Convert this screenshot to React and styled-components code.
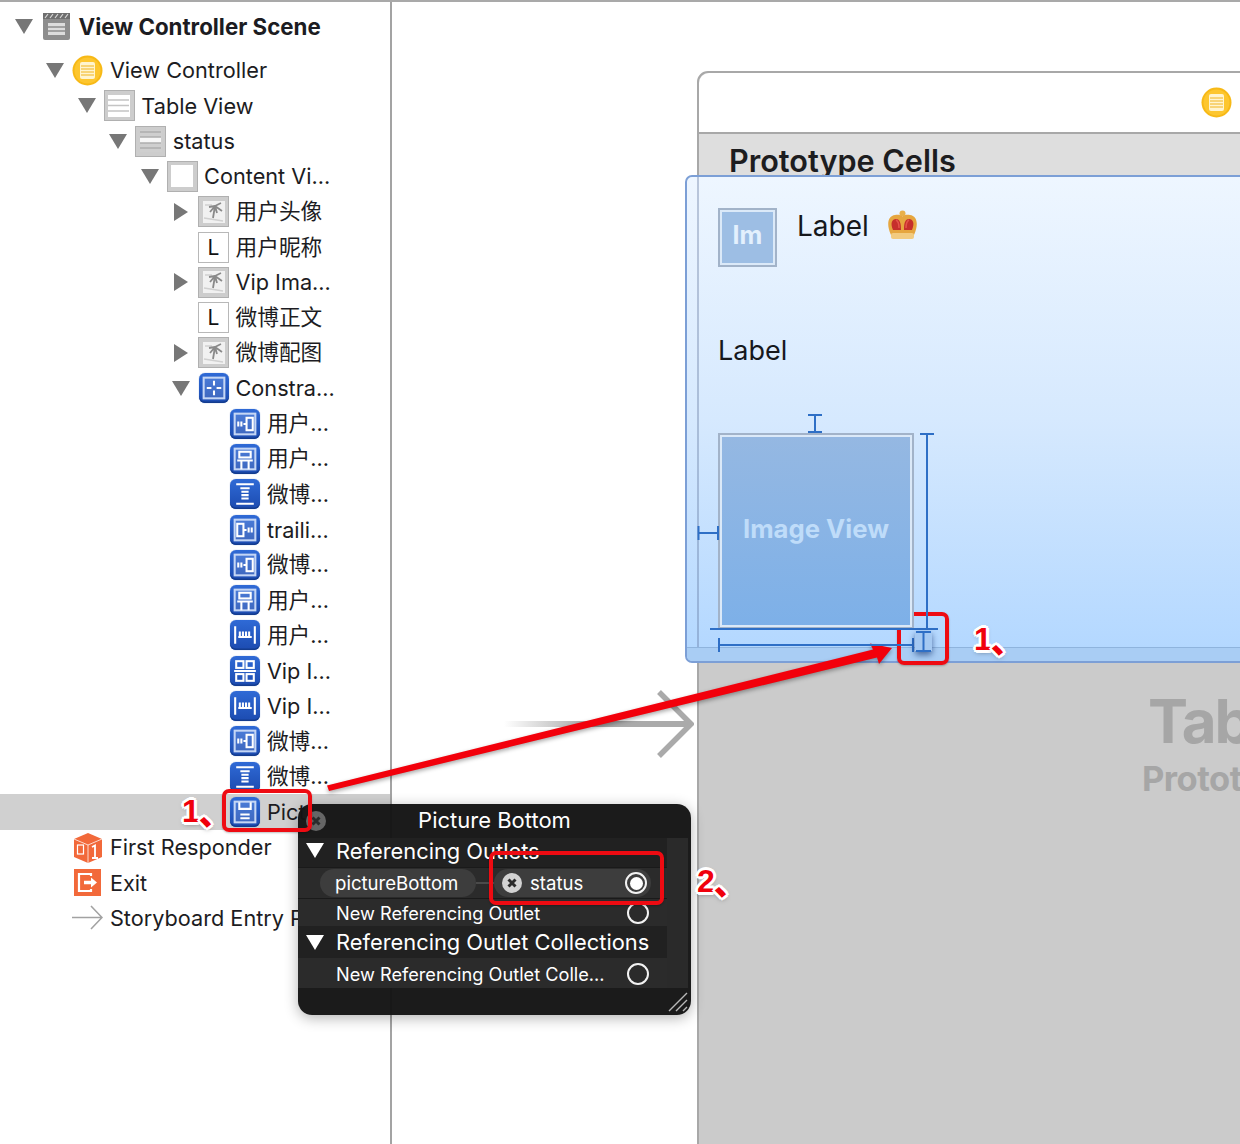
import React from "react"
import styled, { createGlobalStyle } from "styled-components"

const FONT = `Inter, "Noto Sans CJK SC", sans-serif`

const GlobalStyle = createGlobalStyle`
  html, body {
    margin: 0;
    padding: 0;
    background: #fff;
  }
  body {
    font-family: ${FONT};
    color: #1c1c22;
  }
`

const outline = [
  { depth: 1, tri: "open", icon: "vc", label: "View Controller" },
  { depth: 2, tri: "open", icon: "table", label: "Table View" },
  { depth: 3, tri: "open", icon: "cell", label: "status" },
  { depth: 4, tri: "open", icon: "content", label: "Content Vi…" },
  { depth: 5, tri: "closed", icon: "image", label: "用户头像" },
  { depth: 5, icon: "label", label: "用户昵称" },
  { depth: 5, tri: "closed", icon: "image", label: "Vip Ima…" },
  { depth: 5, icon: "label", label: "微博正文" },
  { depth: 5, tri: "closed", icon: "image", label: "微博配图" },
  { depth: 5, tri: "open", icon: "group", label: "Constra…" },
  { depth: 6, icon: "leading", label: "用户…" },
  { depth: 6, icon: "top", label: "用户…" },
  { depth: 6, icon: "beam", label: "微博…" },
  { depth: 6, icon: "trailing", label: "traili…" },
  { depth: 6, icon: "leading", label: "微博…" },
  { depth: 6, icon: "top", label: "用户…" },
  { depth: 6, icon: "width", label: "用户…" },
  { depth: 6, icon: "grid", label: "Vip I…" },
  { depth: 6, icon: "width", label: "Vip I…" },
  { depth: 6, icon: "leading", label: "微博…" },
  { depth: 6, icon: "beam", label: "微博…" },
  { depth: 6, icon: "floppy", label: "Pict…", selected: true },
  { depth: 1, icon: "responder", label: "First Responder" },
  { depth: 1, icon: "exit", label: "Exit" },
  { depth: 1, icon: "entry", label: "Storyboard Entry Poi…" },
]

const hasCjk = (text) => /[\u4e00-\u9fff]/.test(text)

const Page = styled.div`
  position: relative;
  display: flex;
  width: 1240px;
  height: 1144px;
  overflow: hidden;
  box-sizing: border-box;
  border-top: 2px solid #a9a9a9;
  background: #fff;
`

const Sidebar = styled.aside`
  flex: 0 0 392px;
  box-sizing: border-box;
  padding-top: 7px;
  border-right: 2px solid #a3a3a3;
  overflow: hidden;
`

const Row = styled.div`
  display: flex;
  align-items: center;
  box-sizing: border-box;
  height: 35.32px;
  padding-left: ${(p) => 15 + p.$depth * 31.4}px;
  font-size: 21.7px;
  white-space: nowrap;
  background: ${(p) => (p.$selected ? "#d0d0d0" : "transparent")};
`

const SceneRow = styled(Row)`
  margin-bottom: 8.5px;
  font-size: 22.3px;
  font-weight: 700;
`

const RowLabel = styled.span`
  margin-bottom: ${(p) => (p.$cjk ? 4 : 0)}px;
`

const TriSlot = styled.span`
  flex: 0 0 ${(p) => p.$w || 26}px;
  display: flex;
  align-items: center;
`

const Tri = styled.span`
  display: block;
  width: 0;
  height: 0;
  ${(p) =>
    p.$open
      ? `border-left: 9px solid transparent;
         border-right: 9px solid transparent;
         border-top: 15px solid ${p.$color || "#777"};`
      : `margin-left: 2px;
         border-top: 9px solid transparent;
         border-bottom: 9px solid transparent;
         border-left: 14px solid ${p.$color || "#777"};`}
`

const IconSlot = styled.span`
  flex: 0 0 31px;
  height: 31px;
  margin-right: 6.5px;
  display: flex;
  align-items: center;
  justify-content: center;
`

const GrayTile = styled.span`
  display: flex;
  width: 31px;
  height: 31px;
  box-sizing: border-box;
  border: 1.5px solid #b0b0b0;
  background: #cdcdcd;
  padding: 3.5px;
`

const TileFace = styled.span`
  display: flex;
  flex: 1;
  background: ${(p) => p.$fill || "#fff"};
`

const LabelTile = styled.span`
  display: flex;
  align-items: center;
  justify-content: center;
  width: 31px;
  height: 31px;
  box-sizing: border-box;
  border: 1.5px solid #b8b8b8;
  background: #fff;
  color: #111;
  font-size: 21px;
`

const BlueTile = styled.span`
  display: flex;
  width: 30px;
  height: 30px;
  margin-left: 1px;
  border-radius: 6px;
  background: linear-gradient(180deg, #2f6ad6 0%, #1c4bb0 100%);
  box-shadow: inset 0 -1.5px 0 #143c8e, 0 0 1px #5f82c6;
`

const Canvas = styled.main`
  position: relative;
  flex: 1;
`

/* the scene sits on Interface Builder's free canvas */
const SceneFrame = styled.section`
  position: absolute;
  left: 305px;
  top: 69px;
  width: 760px;
  height: 1100px;
  box-sizing: border-box;
  border: 2px solid #a8a8a8;
  border-top-left-radius: 11px;
  display: flex;
  flex-direction: column;
  background: #cbcbcb;
`

const NavBar = styled.div`
  flex: 0 0 59px;
  background: #fff;
  border-bottom: 2px solid #a8a8a8;
  border-top-left-radius: 10px;
  display: flex;
  align-items: center;
  padding-left: 502px;
`

const SectionBar = styled.div`
  flex: 0 0 43px;
  box-sizing: border-box;
  background: #dedede;
  padding: 10px 0 0 30px;
  font-size: 30.6px;
  font-weight: 600;
  line-height: 34px;
  color: #1d1d1f;
  overflow: hidden;
`

const TablePlaceholder = styled.div`
  padding: 510px 0 0 449px;
  color: #a6a6a6;
  font-weight: 700;
  white-space: nowrap;
`

const PlaceholderTitle = styled.div`
  font-size: 60px;
  line-height: 68px;
  letter-spacing: -2px;
`

const PlaceholderSub = styled.div`
  font-size: 34.5px;
  line-height: 40px;
  margin: 4px 0 0 -6px;
  letter-spacing: -0.5px;
`

const Cell = styled.div`
  position: absolute;
  left: -14px;
  top: 102px;
  width: 780px;
  height: 488px;
  box-sizing: border-box;
  border: 2px solid #7c9fd6;
  border-radius: 7px;
  background: linear-gradient(180deg, #eef6ff 0%, #d6e9fe 50%, #b4d8ff 97%);

  &::before {
    content: "";
    position: absolute;
    left: 10px;
    top: 0;
    bottom: 0;
    width: 2px;
    background: rgba(90, 110, 150, 0.35);
  }

  &::after {
    content: "";
    position: absolute;
    left: 0;
    right: 0;
    bottom: 0;
    height: 13px;
    border-top: 1.5px solid #8fb4dd;
    background: #a9cdf4;
    border-bottom-left-radius: 5px;
  }
`

const ImageBox = styled.div`
  position: absolute;
  left: ${(p) => p.$x}px;
  top: ${(p) => p.$y}px;
  width: ${(p) => p.$size}px;
  height: ${(p) => p.$size}px;
  box-sizing: border-box;
  display: flex;
  align-items: center;
  justify-content: center;
  padding-bottom: 6px;
  border: 2px solid #a2b3c9;
  box-shadow: inset 0 0 0 2px #dbe9f8;
  background: ${(p) => p.$fill};
  color: ${(p) => p.$ink};
  font-size: ${(p) => p.$font}px;
  font-weight: 700;
  z-index: 1;
`

const CellLabel = styled.div`
  position: absolute;
  left: ${(p) => p.$x}px;
  top: ${(p) => p.$y}px;
  font-size: ${(p) => p.$size}px;
  line-height: 34px;
  color: #16181c;
`

const Crown = styled.svg`
  position: absolute;
  left: 200px;
  top: 33px;
  width: 31px;
  height: 31px;
`

const ConstraintLines = styled.svg`
  position: absolute;
  left: 0;
  top: 0;
  width: 300px;
  height: 486px;
  z-index: 2;
`

const Segue = styled.svg`
  position: absolute;
  left: 112px;
  top: 686px;
  width: 190px;
  height: 70px;
`

const Popup = styled.div`
  position: absolute;
  left: 298px;
  top: 802px;
  width: 393px;
  height: 211px;
  border-radius: 14px;
  background: rgba(20, 20, 20, 0.97);
  box-shadow: 0 3px 14px rgba(0, 0, 0, 0.3);
  color: #fff;
  display: flex;
  flex-direction: column;
  overflow: hidden;
`

const PopupTitle = styled.div`
  flex: 0 0 34px;
  text-align: center;
  font-size: 22px;
  line-height: 33px;
`

const PopupBody = styled.div`
  flex: 0 0 150px;
  display: flex;
`

const PopupList = styled.div`
  flex: 1;
  display: flex;
  flex-direction: column;
`

const ScrollTrack = styled.div`
  flex: 0 0 21px;
  margin-right: 3px;
  background: #2a2a2a;
`

const SectionHead = styled.div`
  display: flex;
  align-items: center;
  box-sizing: border-box;
  height: ${(p) => p.$h}px;
  padding: 0 0 ${(p) => p.$pb}px 8px;
  font-size: 21.85px;
  background: #212121;
`

const OutletRow = styled.div`
  display: flex;
  align-items: center;
  justify-content: space-between;
  box-sizing: border-box;
  height: ${(p) => p.$h}px;
  padding: 0 18px 0 38px;
  font-size: 18.2px;
  background: ${(p) => p.$bg || "#2b2b2b"};
  border-top: 1px solid ${(p) => p.$line || "transparent"};
`

const ConnectedRow = styled(OutletRow)`
  justify-content: flex-start;
  padding: 0 16px 0 22px;
`

const Pill = styled.span`
  display: flex;
  align-items: center;
  box-sizing: border-box;
  height: 28px;
  width: ${(p) => p.$w}px;
  border-radius: 14px;
  padding: 0 4px 0 ${(p) => p.$pad}px;
  background: #3d3d3d;
  font-size: 18.6px;
`

const PillLink = styled.span`
  width: 18px;
  height: 2px;
  background: #4a4a4a;
`

const StatusText = styled.span`
  flex: 1;
  margin-left: 8px;
`

const Radio = styled.span`
  flex: 0 0 22px;
  width: 22px;
  height: 22px;
  box-sizing: border-box;
  border: 2px solid #f2f2f2;
  border-radius: 50%;
  display: flex;
  align-items: center;
  justify-content: center;

  &::after {
    content: "";
    width: 13px;
    height: 13px;
    border-radius: 50%;
    background: ${(p) => (p.$on ? "#fff" : "transparent")};
  }
`

const CloseDot = styled.svg`
  flex: 0 0 20px;
  width: 20px;
  height: 20px;
`

const CornerClose = styled.svg`
  position: absolute;
  left: 306px;
  top: 809px;
  width: 20px;
  height: 20px;
`

const Grip = styled.svg`
  position: absolute;
  right: 3px;
  bottom: 3px;
  width: 20px;
  height: 20px;
`

const Callout = styled.div`
  position: absolute;
  left: ${(p) => p.$x}px;
  top: ${(p) => p.$y}px;
  width: ${(p) => p.$w}px;
  height: ${(p) => p.$h}px;
  box-sizing: border-box;
  border: 4px solid #ee0b12;
  border-radius: 7px;
  box-shadow: 0 1px 2px rgba(0, 0, 0, 0.25);
`

const Step = styled.div`
  position: absolute;
  left: ${(p) => p.$x}px;
  top: ${(p) => p.$y}px;
  display: flex;
  align-items: center;
  font-family: "Liberation Sans", "Noto Sans CJK SC", sans-serif;
  font-size: 32px;
  font-weight: 700;
  line-height: 34px;
  color: #f0000c;
  text-shadow: 3px 0 0 #fff, -3px 0 0 #fff, 0 3px 0 #fff, 0 -3px 0 #fff,
    2px 2px 0 #fff, -2px -2px 0 #fff, 2px -2px 0 #fff, -2px 2px 0 #fff,
    0 2px 5px rgba(0, 0, 0, 0.5);
`

const StepMark = styled.span`
  margin-left: -1px;
  font-family: "Noto Sans CJK SC", sans-serif;
  font-size: 33px;
  font-weight: 900;
`

const ArrowLayer = styled.svg`
  position: absolute;
  left: 0;
  top: -2px;
  width: 1240px;
  height: 1144px;
  pointer-events: none;
  filter: drop-shadow(0 2px 2px rgba(0, 0, 0, 0.35));
`

const Glyph = ({ children }) => (
  <svg width="30" height="30" viewBox="0 0 29 29" fill="none" stroke="#fff" strokeWidth="2">
    {children}
  </svg>
)

const Frame = () => <rect x="4.5" y="4.5" width="20" height="20" stroke="#c4d6f5" fill="#fff" fillOpacity="0.14" />

const TileSvg = ({ children }) => (
  <svg width="21" height="21" viewBox="0 0 21 21" fill="none">
    {children}
  </svg>
)

const ControllerDot = () => (
  <svg width="31" height="31" viewBox="0 0 31 31">
    <circle cx="15.5" cy="15.5" r="15" fill="#f7b916" />
    <circle cx="15.5" cy="15.5" r="13" fill="#fdc62e" />
    <rect x="8" y="7" width="15" height="17" rx="2" fill="#fff4cf" />
    <path d="M9 11h13M9 14h13M9 17h13M9 20h13" stroke="#f6c95a" strokeWidth="1.3" />
  </svg>
)

const icons = {
  scene: (
    <svg width="29" height="29" viewBox="0 0 29 29">
      <rect x="1" y="1" width="27" height="27" rx="2" fill="#8d8d8d" />
      <rect x="1" y="1" width="27" height="6" fill="#6f6f6f" />
      <path d="M3 6l3-4M8 6l3-4M13 6l3-4M18 6l3-4M23 6l3-4" stroke="#d8d8d8" strokeWidth="1.2" />
      <rect x="6" y="11" width="17" height="12" fill="#dcdcdc" />
      <path d="M6 15h17M6 19h17" stroke="#8d8d8d" strokeWidth="1.4" />
    </svg>
  ),
  vc: <ControllerDot />,
  table: (
    <GrayTile>
      <TileFace>
        <TileSvg>
          <path d="M0 5h21M0 10.5h21M0 16h21" stroke="#c4c4c4" strokeWidth="1.5" />
        </TileSvg>
      </TileFace>
    </GrayTile>
  ),
  cell: (
    <GrayTile>
      <TileFace $fill="#cfcfcf">
        <TileSvg>
          <rect x="0" y="7" width="21" height="6" fill="#f7f7f7" />
          <path d="M0 2h21M0 7h21M0 13h21M0 18h21" stroke="#aeaeae" strokeWidth="1.3" />
        </TileSvg>
      </TileFace>
    </GrayTile>
  ),
  content: (
    <GrayTile>
      <TileFace />
    </GrayTile>
  ),
  image: (
    <GrayTile>
      <TileFace $fill="#f1f1f1">
        <TileSvg>
          <path d="M2 4h7M1 17l19 3" stroke="#d0d0d0" strokeWidth="1.5" />
          <path d="M12 5l-2 12M12 5L6 6M12 5l6-3M12 5l7 5M12 5l-5 6M12 5l2 7" stroke="#8a8a8a" strokeWidth="1.8" />
        </TileSvg>
      </TileFace>
    </GrayTile>
  ),
  label: <LabelTile>L</LabelTile>,
  group: (
    <BlueTile>
      <Glyph>
        <Frame />
        <path d="M14.5 7.5v4.5M14.5 17v4.5M7.5 14.5H12M17 14.5h4.5" />
      </Glyph>
    </BlueTile>
  ),
  leading: (
    <BlueTile>
      <Glyph>
        <Frame />
        <path d="M8 12v5M11 12v5M13 14.5h3" />
        <rect x="16" y="8.5" width="6" height="12" />
      </Glyph>
    </BlueTile>
  ),
  trailing: (
    <BlueTile>
      <Glyph>
        <Frame />
        <rect x="7" y="8.5" width="6" height="12" />
        <path d="M13 14.5h3M18 12v5M21 12v5" />
      </Glyph>
    </BlueTile>
  ),
  top: (
    <BlueTile>
      <Glyph>
        <Frame />
        <rect x="9" y="7.5" width="11" height="5.5" />
        <path d="M7 16h15M11 16v8.5M18 16v8.5" />
      </Glyph>
    </BlueTile>
  ),
  beam: (
    <BlueTile>
      <Glyph>
        <path d="M6 5h17M6 24h17M10 9h9M11 12.3h7M11 15.6h7M11 18.9h7" />
      </Glyph>
    </BlueTile>
  ),
  width: (
    <BlueTile>
      <Glyph>
        <path d="M5 6v17M24 6v17M8 16.5h13M9.5 11v5M12.5 11v5M15.5 11v5M18.5 11v5" />
      </Glyph>
    </BlueTile>
  ),
  grid: (
    <BlueTile>
      <Glyph>
        <path d="M4 14.5h21" />
        <rect x="6" y="5" width="7" height="6.5" />
        <rect x="16" y="5" width="7" height="6.5" />
        <rect x="6" y="17.5" width="7" height="6.5" />
        <rect x="16" y="17.5" width="7" height="6.5" />
      </Glyph>
    </BlueTile>
  ),
  floppy: (
    <BlueTile>
      <Glyph>
        <Frame />
        <path d="M9 5v6.5h11V5M10 17h9M10 20.5h9" />
      </Glyph>
    </BlueTile>
  ),
  responder: (
    <svg width="31" height="31" viewBox="0 0 31 31">
      <path d="M16 1l14 6v18l-14 6-14-6V7z" fill="#f2693a" />
      <path d="M2 7l14 6 14-6M16 13v18" stroke="#fff" strokeWidth="1" fill="none" opacity="0.75" />
      <rect x="5.5" y="13" width="6" height="9" stroke="#fff" strokeWidth="1.2" fill="none" />
      <path d="M20 15l3-1.5V26M20 26h6" stroke="#fff" strokeWidth="1.8" fill="none" />
    </svg>
  ),
  exit: (
    <svg width="29" height="29" viewBox="0 0 29 29">
      <rect x="1" y="1" width="27" height="27" fill="#f2693a" />
      <path d="M18 8V6H6v17h12v-2" stroke="#fff" strokeWidth="2.2" fill="none" />
      <path d="M11 14.5h8" stroke="#fff" strokeWidth="3.5" />
      <path d="M18 9.5l6 5-6 5z" fill="#fff" />
    </svg>
  ),
  entry: (
    <svg width="31" height="31" viewBox="0 0 31 31">
      <path d="M0 15.500h30M19 4l11 11.500L19 27" stroke="#a2a2a2" strokeWidth="1.6" fill="none" />
    </svg>
  ),
}

const XBadge = ({ as: Comp = CloseDot, disc = "#d2d2d2", ink = "#2a2a2a" }) => (
  <Comp viewBox="0 0 20 20">
    <circle cx="10" cy="10" r="10" fill={disc} />
    <path d="M6.5 6.5l7 7M13.5 6.5l-7 7" stroke={ink} strokeWidth="3" />
  </Comp>
)

const App = () => {
  return (
    <Page>
      <GlobalStyle />
      <Sidebar>
        <SceneRow $depth={0}>
          <TriSlot>
            <Tri $open />
          </TriSlot>
          <IconSlot>{icons.scene}</IconSlot>
          View Controller Scene
        </SceneRow>
        {outline.map((row, i) => (
          <Row key={i} $depth={row.depth} $selected={row.selected}>
            <TriSlot>{row.tri && <Tri $open={row.tri === "open"} />}</TriSlot>
            <IconSlot>{icons[row.icon]}</IconSlot>
            <RowLabel $cjk={hasCjk(row.label)}>{row.label}</RowLabel>
          </Row>
        ))}
      </Sidebar>

      <Canvas>
        <Segue viewBox="0 0 190 70">
          <defs>
            <linearGradient id="segueFade" x1="0" x2="1" y1="0" y2="0">
              <stop offset="0" stopColor="#aaa" stopOpacity="0" />
              <stop offset="0.45" stopColor="#aaa" />
            </linearGradient>
          </defs>
          <rect x="0" y="33" width="184" height="6" fill="url(#segueFade)" />
          <path d="M155 4l32 32-32 32" stroke="#aaa" strokeWidth="5.5" fill="none" />
        </Segue>

        <SceneFrame>
          <NavBar>
            <ControllerDot />
          </NavBar>
          <SectionBar>Prototype Cells</SectionBar>
          <TablePlaceholder>
            <PlaceholderTitle>Table View</PlaceholderTitle>
            <PlaceholderSub>Prototype Content</PlaceholderSub>
          </TablePlaceholder>

          <Cell>
            <ImageBox $x={31} $y={31} $size={59} $fill="#9dbee4" $ink="#e3f0fd" $font={25}>
              Im
            </ImageBox>
            <CellLabel $x={110} $y={32} $size={28}>Label</CellLabel>
            <Crown viewBox="0 0 31 31">
              <circle cx="15.5" cy="3.5" r="3" fill="#e8b04a" />
              <path d="M4 25C-1 14 1 6 8 5c3-.5 6 0 7.5 1.5C17 5 20 4.500 23 5c7 1 9 9 4 20z" fill="#e6a63f" />
              <path d="M6 20C3 13 5 9 9 9c4 0 5 4 5 11zM17 20c0-7 1-11 5-11s6 4 3 11z" fill="#c62f2c" />
              <path d="M9 10c2 1 3 4 3 8M22 10c-2 1-3 4-3 8" stroke="#e4524a" strokeWidth="1.5" fill="none" />
              <rect x="4" y="23" width="23" height="6" rx="2" fill="#f2cb80" />
            </Crown>
            <CellLabel $x={31} $y={157} $size={27}>Label</CellLabel>
            <ImageBox $x={31} $y={256} $size={196} $fill="linear-gradient(180deg, #95b8e2 0%, #7db0e8 100%)" $ink="#bfdcf9" $font={25.7}>
              Image View
            </ImageBox>
            <ConstraintLines viewBox="0 0 300 486">
              <g stroke="#2e6fc6" strokeWidth="2" fill="none">
                <path d="M121 238h14M128 238v17M121 255h14" />
                <path d="M11.5 349v14M11.500 356h20M31 349v14" />
                <path d="M233 257h14M240 257v194" />
                <path d="M23 452h228" />
                <path d="M32 461v14M32 468h194M226 461v14" />
              </g>
              <g style={{ filter: "drop-shadow(0 3px 3px rgba(20, 50, 110, 0.65))" }}>
                <rect x="228" y="455" width="17" height="19" fill="#a5c9f2" />
                <path d="M229 455h15M236.500 455v19M229 474h15" stroke="#2e6fc6" strokeWidth="2" fill="none" />
              </g>
            </ConstraintLines>
          </Cell>
        </SceneFrame>
      </Canvas>

      <Popup>
        <PopupTitle>Picture Bottom</PopupTitle>
        <PopupBody>
          <PopupList>
            <SectionHead $h={29} $pb={4}>
              <TriSlot $w={30}>
                <Tri $open $color="#fff" />
              </TriSlot>
              Referencing Outlets
            </SectionHead>
            <ConnectedRow $h={31} $line="#1a1a1a">
              <Pill $w={156} $pad={15}>pictureBottom</Pill>
              <PillLink />
              <Pill $w={157} $pad={8}>
                <XBadge />
                <StatusText>status</StatusText>
                <Radio $on />
              </Pill>
            </ConnectedRow>
            <OutletRow $h={28} $line="#1a1a1a">
              New Referencing Outlet
              <Radio />
            </OutletRow>
            <SectionHead $h={32} $pb={0}>
              <TriSlot $w={30}>
                <Tri $open $color="#fff" />
              </TriSlot>
              Referencing Outlet Collections
            </SectionHead>
            <OutletRow $h={30}>
              New Referencing Outlet Colle...
              <Radio />
            </OutletRow>
          </PopupList>
          <ScrollTrack />
        </PopupBody>
        <Grip viewBox="0 0 20 20">
          <path d="M1 19L19 1M8 19L19 8M15 19l4-4" stroke="#b8b8b8" strokeWidth="1.4" />
        </Grip>
      </Popup>
      <XBadge as={CornerClose} disc="#666" ink="#2c2c2c" />

      <ArrowLayer viewBox="0 0 1240 1144">
        <path d="M327 785.500L873 649.500l-3-6 22 4.500-13 16-2-6.500L329 791z" fill="#f2000b" />
      </ArrowLayer>
      <Callout $x={222} $y={787} $w={90} $h={43} />
      <Callout $x={489} $y={849} $w={175} $h={54} />
      <Callout $x={897} $y={610} $w={52} $h={53} />
      <Step $x={182} $y={792}>1<StepMark>、</StepMark></Step>
      <Step $x={974} $y={620}>1<StepMark>、</StepMark></Step>
      <Step $x={697} $y={862}>2<StepMark>、</StepMark></Step>
    </Page>
  )
}

export default App
